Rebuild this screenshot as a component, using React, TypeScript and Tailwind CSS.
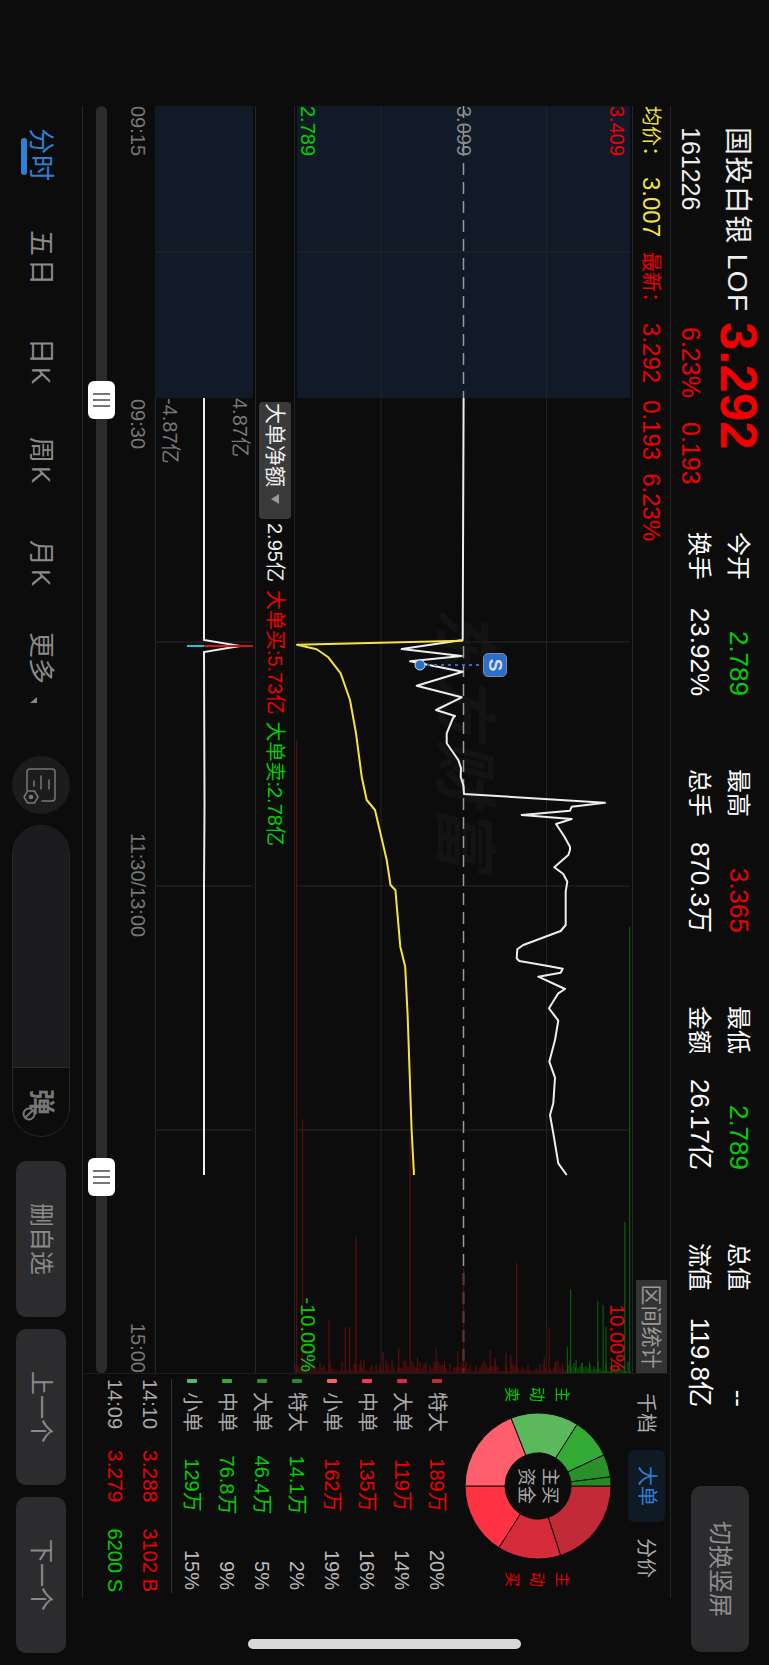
import React from "react";

// The app is a landscape layout shown turned by 90deg, so everything below is in landscape px.
const stats = [
  { a: "今开", av: "2.789", ac: "text-[#00d000]", b: "换手", bv: "23.92%" },
  { a: "最高", av: "3.365", ac: "text-[#f00000]", b: "总手", bv: "870.3万" },
  { a: "最低", av: "2.789", ac: "text-[#00d000]", b: "金额", bv: "26.17亿" },
  { a: "总值", av: "--", ac: "text-white", b: "流值", bv: "119.8亿" },
];

const tabs = [
  { label: "五日", w: "w-[108px]" },
  { label: "日K", w: "w-[99px]" },
  { label: "周K", w: "w-[103px]" },
  { label: "月K", w: "w-[92px]" },
];

const flows = [
  { name: "特大", val: "189万", pct: "20%", dot: "bg-[#c42a3a]", color: "text-[#f00000]" },
  { name: "大单", val: "119万", pct: "14%", dot: "bg-[#e02a3c]", color: "text-[#f00000]" },
  { name: "中单", val: "135万", pct: "16%", dot: "bg-[#ff3344]", color: "text-[#f00000]" },
  { name: "小单", val: "162万", pct: "19%", dot: "bg-[#ff5f6c]", color: "text-[#f00000]" },
  { name: "特大", val: "14.1万", pct: "2%", dot: "bg-[#228b22]", color: "text-[#00d000]" },
  { name: "大单", val: "46.4万", pct: "5%", dot: "bg-[#2b8f2b]", color: "text-[#00d000]" },
  { name: "中单", val: "76.8万", pct: "9%", dot: "bg-[#33aa33]", color: "text-[#00d000]" },
  { name: "小单", val: "129万", pct: "15%", dot: "bg-[#5cb85c]", color: "text-[#00d000]" },
];

const ticks = [
  { t: "14:10", p: "3.288", v: "3102 B", c: "text-[#f00000]" },
  { t: "14:09", p: "3.279", v: "6200 S", c: "text-[#00d000]" },
];

const slices = [
  { pct: 20, fill: "#c12a36" },
  { pct: 14, fill: "#d62b3a" },
  { pct: 16, fill: "#ff3344" },
  { pct: 19, fill: "#ff5f6c" },
  { pct: 15, fill: "#5cb85c" },
  { pct: 9, fill: "#33aa33" },
  { pct: 5, fill: "#2b8f2b" },
  { pct: 2, fill: "#228b22" },
];

const priceLine = [
  [292, 168.4], [534, 169.3], [543, 230.3], [550, 170.3], [555.3, 222], [565.7, 169.3], [579.7, 215.3],
  [591.3, 170.3], [604, 196], [610, 177], [612, 179], [627.3, 185.3], [637.3, 185.3], [654, 173.7], [662, 171],
  [670.7, 171.3], [680, 168.5], [688, 168], [696.7, 27], [700.7, 60.3], [704.7, 62], [709, 110.3], [713, 60.3],
  [718, 76], [730, 68], [740.7, 62], [744, 62], [749, 63.7], [761.3, 77.7], [768, 68.7], [775.7, 64.7],
  [785.7, 66.3], [819, 66.3], [825, 71.3], [839, 108.7], [843.3, 114.7], [852.3, 115.3], [855, 112.7],
  [859.7, 85.3], [862.7, 69.3], [866.7, 71.3], [870.7, 93.7], [883, 67], [887.3, 73.7], [902.3, 83],
  [914.7, 73.7], [934, 77], [955.7, 82.7], [971.7, 77], [997.3, 78.7], [1009, 82], [1027.3, 78.7],
  [1057.3, 73.7], [1069, 65.3],
];

const avgLine = [
  [534.7, 169.3], [538.7, 335], [543.3, 315.3], [551.3, 303.7], [567.3, 291.3], [594, 282], [627.3, 276],
  [670.7, 270.3], [694, 265.3], [704, 257], [754, 245.3], [779, 241.5], [784, 236.6], [840.7, 231.7],
  [860.7, 226.8], [910.7, 224.3], [1024, 220.4], [1069, 218],
];

const redBars = [
  [335.3, 634], [329.4, 1013], [303, 1214], [286.7, 1221], [282.3, 1221], [276, 1131], [271, 1254], [249, 1246],
  [233.2, 1242], [222, 1031], [214.5, 1251], [195.8, 1242], [187.5, 1255], [174.2, 1245], [168.3, 1162],
  [141.8, 1244], [136.9, 1252], [126, 1247], [121.2, 1249], [115.3, 1157], [104, 1259], [87.8, 1251],
  [82.9, 1221], [77, 1257], [69.6, 1257],
];

const greenBars = [
  [64.7, 1241], [61.3, 1183], [56.4, 1261], [50, 1257], [42.6, 1256], [34.2, 1195], [28.9, 1199], [26, 1221],
  [20.5, 1254], [7.2, 1116], [2.3, 821],
];

const gridX = [146, 536, 780, 1024];
const toPoints = (pts: number[][]) => pts.map((p) => p.join(",")).join(" ");

// low noise along the right edge of the plot
const noise = Array.from({ length: 168 }, (_, i) => {
  const y = 2 + i * 2;
  const r = Math.abs(Math.sin(i * 12.9898) * 43758.5453) % 1;
  return { y, len: 2 + r * r * 11 };
});

const slicePath = (from: number, to: number) => {
  const pt = (pct: number, r: number) => {
    const a = (pct / 100) * Math.PI * 2 - Math.PI / 2;
    return `${73 + r * Math.cos(a)} ${73 + r * Math.sin(a)}`;
  };
  const big = to - from > 50 ? 1 : 0;
  return `M${pt(from, 33)} L${pt(from, 73)} A73 73 0 ${big} 1 ${pt(to, 73)} L${pt(to, 33)} A33 33 0 ${big} 0 ${pt(from, 33)}Z`;
};

const Donut = () => {
  let sum = 0;
  return (
    <div className="relative w-[146px] h-[146px]">
      <svg width="146" height="146" viewBox="0 0 146 146">
        {slices.map((s) => {
          const d = slicePath(sum, sum + s.pct);
          sum += s.pct;
          return <path key={s.fill} d={d} fill={s.fill} stroke="#0c0c0c" strokeWidth="1" />;
        })}
      </svg>
      <div className="absolute inset-0 flex flex-col items-center justify-center text-[18px] leading-[24px] text-[#aaa]">
        <span>主买</span>
        <span>资金</span>
      </div>
    </div>
  );
};

const PlotChart = () => (
  <svg width="1267" height="337" viewBox="0 0 1267 337" className="relative block">
    <rect x="0" y="2" width="292" height="333" fill="#111b27" />
    {gridX.map((x) => (
      <line key={x} x1={x} x2={x} y1="2" y2="335" stroke="#262626" />
    ))}
    <line x1="0" x2="1267" y1="251" y2="251" stroke="#222" />
    <line x1="0" x2="1267" y1="85.5" y2="85.5" stroke="#222" />
    <line x1="0" x2="292" y1="168.5" y2="168.5" stroke="#999" strokeWidth="1.5" strokeDasharray="12 7" />
    <line x1="540" x2="1267" y1="168.5" y2="168.5" stroke="#999" strokeWidth="1.5" strokeDasharray="12 7" />
    {redBars.map(([y, x]) => (
      <line key={y} x1={x} x2="1267" y1={y} y2={y} stroke="#6e0c0c" />
    ))}
    {greenBars.map(([y, x]) => (
      <line key={y} x1={x} x2="1267" y1={y} y2={y} stroke="#0c6a0c" />
    ))}
    {noise.map((n) => (
      <line key={n.y} x1={1267 - n.len} x2="1267" y1={n.y} y2={n.y} stroke={n.y > 65 ? "#6e0c0c" : "#0c6a0c"} />
    ))}
    <polyline points={toPoints(priceLine)} fill="none" stroke="#eee" strokeWidth="2" strokeLinejoin="round" />
    <polyline points={toPoints(avgLine)} fill="none" stroke="#f5e43a" strokeWidth="2" strokeLinejoin="round" />
    <line x1="559" x2="559" y1="125" y2="212" stroke="#2a6fc9" strokeWidth="2" strokeDasharray="3 4" />
    <circle cx="559" cy="212" r="5" fill="#2a6fc9" stroke="#cde" strokeWidth="1" />
  </svg>
);

const SubChart = () => (
  <svg width="1267" height="101" viewBox="0 0 1267 101" className="block">
    <rect x="0" y="2" width="292" height="98" fill="#111b27" />
    {gridX.map((x) => (
      <line key={x} x1={x} x2={x} y1="2" y2="100" stroke="#262626" />
    ))}
    <polyline
      points="292,51 534,51 540,15 546,51 700,50.5 780,51 779,51 1069,51"
      fill="none"
      stroke="#eee"
      strokeWidth="2"
    />
    <line x1="540" x2="540" y1="2" y2="51" stroke="#e01010" strokeWidth="2" />
    <line x1="540" x2="540" y1="51" y2="68" stroke="#16c8d0" strokeWidth="2" />
  </svg>
);

const Handle = ({ pos }: { pos: string }) => (
  <div className={`absolute top-[-8px] w-[38px] h-[27px] rounded-[6px] bg-white flex items-center justify-center gap-[4px] ${pos}`}>
    <span className="w-[2px] h-[17px] bg-[#777]" />
    <span className="w-[2px] h-[17px] bg-[#777]" />
    <span className="w-[2px] h-[17px] bg-[#777]" />
  </div>
);

const ReportIcon = () => (
  <svg width="44" height="44" viewBox="-22 -22 44 44" fill="none" stroke="#777" strokeWidth="1.5" strokeLinecap="round">
    <path d="M5 14 L-13 14 Q-16 14 -16 11 L-16 -11 Q-16 -14 -13 -14 L13 -14 Q16 -14 16 -11 L16 -1" />
    <path d="M-4 7 L1 7 M-9 0 L4 0 M-5 -8 L4 -8" />
    <polygon points="12,3 18,6.5 18,13.5 12,17 6,13.5 6,6.5" />
    <circle cx="12" cy="10" r="1.5" fill="#777" />
  </svg>
);

export default function App() {
  return (
    <div className="w-[769px] h-[1665px] overflow-hidden bg-[#0c0c0c]">
      <div className="relative w-[1665px] h-[769px] origin-top-left translate-x-[769px] rotate-90 flex flex-col font-['Liberation_Sans','Noto_Sans_CJK_SC',sans-serif] text-white">
        {/* header */}
        <div className="h-[98px] flex pl-[127px] pt-[11px]">
          <div className="w-[405px]">
            <div className="h-[39px] flex items-center">
              <span className="w-[195px] mt-[2px] text-[28px] tracking-[1.4px] text-[#eee] whitespace-nowrap">国投白银 LOF</span>
              <span className="text-[51px] font-bold leading-[39px] text-[#f00000]">3.292</span>
            </div>
            <div className="mt-[9px] h-[39px] flex items-center text-[25px]">
              <span className="w-[200px] text-[#eee]">161226</span>
              <span className="w-[95px] text-[#f00000]">6.23%</span>
              <span className="text-[#f00000]">0.193</span>
            </div>
          </div>
          <div className="flex gap-[73px]">
            {stats.map((s) => (
              <div key={s.a} className="w-[164px]">
                <div className="h-[39px] flex items-center justify-between">
                  <span className="text-[24px]">{s.a}</span>
                  <span className={`text-[26px] ${s.ac}`}>{s.av}</span>
                </div>
                <div className="h-[39px] flex items-center justify-between">
                  <span className="text-[24px]">{s.b}</span>
                  <span className="text-[26px]">{s.bv}</span>
                </div>
              </div>
            ))}
          </div>
          <button className="ml-[79px] mt-[9px] w-[166px] h-[58px] rounded-[10px] bg-[#2c2c2e] text-[24px] text-[#8e8e8e]">
            切换竖屏
          </button>
        </div>

        {/* chart + money flow */}
        <div className="ml-[106px] w-[1492px] h-[589px] flex border-y border-[#262626]">
          <div className="w-[1267px] flex flex-col">
            <div className="h-[38px] shrink-0 flex items-center border-b border-[#262626] whitespace-nowrap">
              <span className="text-[20px] text-[#f5e43a]">均价：</span>
              <span className="ml-[11px] text-[24px] text-[#f5e43a]">3.007</span>
              <span className="ml-[15px] text-[20px] text-[#f00000]">最新：</span>
              <span className="ml-[11px] text-[24px] text-[#f00000]">3.292</span>
              <span className="ml-[17px] text-[24px] text-[#f00000]">0.193</span>
              <span className="ml-[13px] text-[24px] text-[#f00000]">6.23%</span>
              <span className="ml-auto w-[93px] h-[31px] bg-[#333] text-[21px] text-[#999] text-center leading-[31px]">区间统计</span>
            </div>

            <div className="relative h-[337px] shrink-0">
              {/* watermark sits under the chart lines */}
              <span className="absolute left-[501px] top-[136px] text-[64px] font-bold italic leading-[64px] tracking-[2px] text-[#131313] whitespace-nowrap">东方财富</span>
              <PlotChart />
              <span className="absolute left-[0px] top-[3px] text-[20px] leading-[24px] text-[#f00000]">3.409</span>
              <span className="absolute left-[0px] top-[156px] text-[20px] leading-[24px] text-[#8a8a8a]">3.099</span>
              <span className="absolute left-[0px] top-[312px] text-[20px] leading-[24px] text-[#00d000]">2.789</span>
              <span className="absolute right-[1px] top-[3px] text-[20px] leading-[24px] text-[#f00000]">10.00%</span>
              <span className="absolute right-[1px] top-[312px] text-[20px] leading-[24px] text-[#00d000]">-10.00%</span>
              <span className="absolute left-[547px] top-[125px] w-[24px] h-[24px] rounded-[5px] bg-[#2a6fc9] border border-[#889] text-center text-[19px] font-bold leading-[22px] text-[#dde]">S</span>
            </div>

            <div className="h-[39px] shrink-0 flex items-center pl-[296px] border-t border-[#222] text-[20px] whitespace-nowrap">
              <span className="w-[117px] h-[32px] rounded-[4px] bg-[#3a3a3a] flex items-center pl-[1px] text-[21px] text-[#eee]">
                大单净额
                <svg width="10" height="10" viewBox="0 0 10 10" className="ml-[7px]">
                  <path d="M0 1 L10 1 L5 9Z" fill="#999" />
                </svg>
              </span>
              <span className="ml-[4px] text-[#eee]">2.95亿</span>
              <span className="ml-[8px] text-[#f00000]">大单买:5.73亿</span>
              <span className="ml-[7px] text-[#00d000]">大单卖:2.78亿</span>
            </div>

            <div className="relative h-[101px] shrink-0 border-y border-[#262626]">
              <SubChart />
              <span className="absolute left-[292px] top-[3px] text-[20px] leading-[24px] text-[#777]">4.87亿</span>
              <span className="absolute left-[292px] top-[73px] text-[20px] leading-[24px] text-[#777]">-4.87亿</span>
            </div>

            <div className="flex-1 pt-[7px]">
              <div className="h-[20px] flex items-center text-[20px] text-[#777] whitespace-nowrap">
                <span className="w-[293px]">09:15</span>
                <span className="w-[434px]">09:30</span>
                <span>11:30/13:00</span>
                <span className="ml-auto">15:00</span>
              </div>
              <div className="relative mt-[21px] h-[11px] rounded-full bg-[#2b2b2d]">
                <Handle pos="left-[275px]" />
                <Handle pos="left-[1052px]" />
              </div>
            </div>
          </div>

          <div className="w-[225px] border-l border-[#1c1c1c]">
            <div className="mt-[5px] h-[37px] flex items-center text-[20px] text-[#aaa]">
              <span className="ml-[19px] w-[40px]">千档</span>
              <span className="ml-[17px] w-[72px] h-[37px] rounded-[6px] bg-[#101a24] text-center leading-[37px] text-[#2f7fd6]">大单</span>
              <span className="ml-[16px] w-[40px]">分价</span>
            </div>
            <div className="mt-[17px] flex items-center">
              <div className="ml-[13px] w-[15px] flex flex-col items-center text-[15px] leading-[25px] text-[#00d000]">
                <span>主</span>
                <span>动</span>
                <span>卖</span>
              </div>
              <div className="ml-[11px]">
                <Donut />
              </div>
              <div className="ml-[13px] w-[15px] flex flex-col items-center text-[15px] leading-[25px] text-[#f00000]">
                <span>主</span>
                <span>动</span>
                <span>买</span>
              </div>
            </div>
            <div className="mt-[10px] pl-[5px] pr-[8px]">
              {flows.map((f, i) => (
                <div key={i} className="h-[35px] flex items-center text-[20px]">
                  <span className={`w-[4px] h-[10px] mr-[9px] rounded-[1px] ${f.dot}`} />
                  <span className="w-[41px] text-[#aaa] whitespace-nowrap">{f.name}</span>
                  <span className={`w-[104px] text-center whitespace-nowrap ${f.color}`}>{f.val}</span>
                  <span className="flex-1 text-right text-[#bbb]">{f.pct}</span>
                </div>
              ))}
            </div>
            <div className="mt-[3px] mx-[5px] border-t border-[#333]" />
            <div className="pl-[5px] pr-[6px] pt-[3px]">
              {ticks.map((t) => (
                <div key={t.t} className="h-[35px] flex items-center text-[20px]">
                  <span className="w-[71px] text-[#aaa]">{t.t}</span>
                  <span className="text-[21px] text-[#f00000]">{t.p}</span>
                  <span className={`ml-auto whitespace-nowrap ${t.c}`}>{t.v}</span>
                </div>
              ))}
            </div>
          </div>
        </div>

        {/* bottom bar */}
        <div className="flex-1 flex items-center pl-[128px] text-[#8a8a8a]">
          <div className="relative w-[102px] text-[26px] tracking-[1px] text-[#2f7fd6]">
            <span>分时</span>
            <span className="absolute left-[10px] top-[33px] w-[37px] h-[6px] rounded-full bg-[#2f7fd6]" />
          </div>
          {tabs.map((t) => (
            <span key={t.label} className={`text-[26px] tracking-[3px] ${t.w}`}>
              {t.label}
            </span>
          ))}
          <span className="text-[26px] w-[65px]">更多</span>
          <svg width="6" height="7" viewBox="0 0 6 7" className="mt-[14px]">
            <path d="M0 0 L6 0 L6 7Z" fill="#8a8a8a" />
          </svg>
          <div className="ml-[53px] w-[58px] h-[58px] rounded-full bg-[#1c1c1e] flex items-center justify-center">
            <ReportIcon />
          </div>
          <div className="ml-[11px] w-[312px] h-[58px] rounded-full border border-[#262626] flex overflow-hidden">
            <div className="flex-1 bg-[#1c1c1e]" />
            <div className="relative w-[69px] flex items-center justify-center border-l border-[#2c2c2c] text-[26px] font-bold text-[#777]">
              弹
              <svg width="14" height="14" viewBox="0 0 14 14" className="absolute right-[15px] bottom-[9px]" fill="#0c0c0c" stroke="#777" strokeWidth="2">
                <circle cx="7" cy="7" r="5.5" />
                <path d="M3.5 3.5 L10.5 10.5" />
              </svg>
            </div>
          </div>
          <div className="ml-[24px] flex gap-[12px] text-[24px]">
            <button className="w-[156px] h-[50px] rounded-[10px] bg-[#2c2c2e]">删自选</button>
            <button className="w-[156px] h-[50px] rounded-[10px] bg-[#2c2c2e]">上一个</button>
            <button className="w-[156px] h-[50px] rounded-[10px] bg-[#2c2c2e]">下一个</button>
          </div>
        </div>

        {/* system home indicator */}
        <div className="absolute left-[1639px] top-[248px] w-[10px] h-[273px] rounded-full bg-[#d8d8d8]" />
      </div>
    </div>
  );
}
